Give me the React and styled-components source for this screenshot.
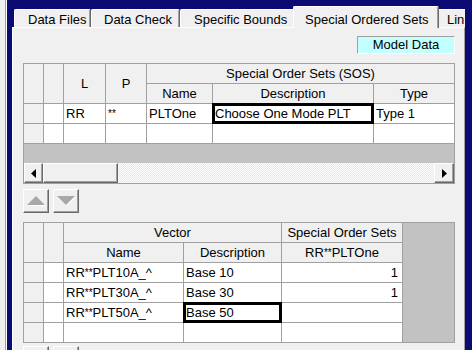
import styled, { createGlobalStyle, css } from "styled-components"

const GlobalStyle = createGlobalStyle`
  html, body {
    margin: 0;
    padding: 0;
    background: #f0f0f0;
  }
  body {
    font-family: "Liberation Sans", Arial, sans-serif;
    font-size: 13px;
    color: #000;
  }
`

const LINE = "#a0a0a0"
const FACE = "#f0f0f0"

const raised = css`
  box-sizing: border-box;
  background: ${FACE};
  border: 1px solid;
  border-color: #fff #696969 #696969 #fff;
  box-shadow: inset -1px -1px ${LINE};
`

const Page = styled.div`
  display: flex;
  width: 472px;
  height: 350px;
  overflow: hidden;
`

const Gutter = styled.div`
  flex: none;
  width: 7px;
  box-sizing: border-box;
  background: ${FACE};
  border-right: 1px solid #fff;
  box-shadow: inset -1px 0 ${LINE};
`

const Window = styled.div`
  flex: 1;
  background: #0b0b73;
  padding: 6px 7px 0 5px;
  overflow: hidden;
`

const TabControl = styled.div`
  display: flex;
  flex-direction: column;
  width: 453px;
  height: 344px;
  overflow: hidden;
`

const TabStrip = styled.div`
  flex: none;
  display: flex;
  align-items: flex-end;
  height: 21px;
  padding-left: 2px;
`

const Tab = styled.div`
  flex: none;
  box-sizing: border-box;
  width: ${(p) => p.$w}px;
  height: 18px;
  padding: 2px 0 0 ${(p) => p.$pl}px;
  line-height: 16px;
  white-space: nowrap;
  background: ${FACE};
  border-top: 1px solid #fff;
  border-left: 1px solid #fff;
  border-right: 1px solid #696969;
  box-shadow: inset -1px 0 ${LINE};
  border-radius: 2px 2px 0 0;
  ${(p) =>
    p.$active &&
    css`
      height: 22px;
      padding-top: 5px;
      margin: 0 -2px -1px;
      position: relative;
      z-index: 1;
    `}
`

const Panel = styled.div`
  flex: 1;
  display: flex;
  flex-direction: column;
  background: ${FACE};
  border-top: 1px solid #fff;
  border-left: 1px solid #fff;
  border-right: 1px solid ${LINE};
  padding: 8px 9px 0 10px;
`

const ModelTag = styled.div`
  align-self: flex-end;
  box-sizing: border-box;
  width: 98px;
  height: 18px;
  border: 1px solid;
  border-color: ${LINE} #fff #fff ${LINE};
  background: #c4ffff;
  text-align: center;
  line-height: 16px;
`

const GridBox = styled.div`
  flex: none;
  display: flex;
  flex-direction: column;
  width: 430px;
  margin-top: ${(p) => p.$top}px;
  border: 1px solid ${LINE};
  background: #c2c2c2;
`

const Sheet = styled.div`
  align-self: flex-start;
  display: grid;
  grid-template-columns: ${(p) => p.$cols};
  grid-auto-rows: 19px;
  gap: 1px;
  background: ${LINE};
  padding-bottom: ${(p) => (p.$lineBelow ? 1 : 0)}px;
  padding-right: ${(p) => (p.$lineRight ? 1 : 0)}px;
`

const Cell = styled.div`
  grid-column: span ${(p) => p.$cs || 1};
  grid-row: span ${(p) => p.$rs || 1};
  display: flex;
  align-items: center;
  justify-content: ${(p) => (p.$head ? "center" : p.$right ? "flex-end" : "flex-start")};
  padding: 0 ${(p) => (p.$right ? 4 : 2)}px;
  background: ${(p) => (p.$head ? FACE : "#fff")};
  line-height: 16px;
  white-space: nowrap;
  overflow: hidden;
  ${(p) =>
    p.$sel &&
    css`
      position: relative;
      z-index: 1;
      box-shadow: 0 0 0 1px #000, inset 0 0 0 2px #000;
    `}
`

const Stars = styled.span`
  font-size: 10px;
  vertical-align: 2px;
`

const Filler = styled.div`
  height: 19px;
`

const ScrollBar = styled.div`
  display: flex;
  height: 20px;
`

const ScrollButton = styled.div`
  ${raised};
  flex: none;
  width: ${(p) => p.$w}px;
  display: flex;
  align-items: center;
  justify-content: center;
`

const Track = styled.div`
  flex: 1;
  background: repeating-conic-gradient(#fff 0 25%, #e6e6e6 0 50%) 0 0 / 2px 2px;
`

const MoveRow = styled.div`
  flex: none;
  display: flex;
  gap: 4px;
  margin-top: ${(p) => p.$top}px;
`

const MoveButton = styled.div`
  ${raised};
  width: 26px;
  height: 24px;
  display: flex;
  align-items: center;
  justify-content: center;
`

const ArrowUp = () => (
  <svg width="20" height="11" viewBox="0 0 20 11">
    <polygon points="2,10 11,1 20,10" fill="#fff" />
    <polygon points="1,9 10,0 19,9" fill="#a8a8a8" />
  </svg>
)

const ArrowDown = () => (
  <svg width="20" height="11" viewBox="0 0 20 11">
    <polygon points="2,1 20,1 11,10" fill="#fff" />
    <polygon points="1,0 19,0 10,9" fill="#a8a8a8" />
  </svg>
)

const ArrowSide = ({ dir }) => (
  <svg width="5" height="9" viewBox="0 0 5 9">
    <polygon points={dir === "left" ? "5,0 5,9 0,4.5" : "0,0 0,9 5,4.5"} fill="#000" />
  </svg>
)

const Name = ({ pre, post }) => (
  <>
    {pre}
    <Stars>**</Stars>
    {post}
  </>
)

const tabs = [
  { label: "Data Files", w: 77, pl: 13 },
  { label: "Data Check", w: 89, pl: 12 },
  { label: "Specific Bounds", w: 115, pl: 13 },
  { label: "Special Ordered Sets", w: 146, pl: 11, active: true },
  { label: "Lin", w: 60, pl: 9 },
]

const vectors = [
  { id: "10", desc: "Base 10", val: "1" },
  { id: "30", desc: "Base 30", val: "1" },
  { id: "50", desc: "Base 50", val: "", sel: true },
]

const MoveButtons = ({ top }) => (
  <MoveRow $top={top}>
    <MoveButton>
      <ArrowUp />
    </MoveButton>
    <MoveButton>
      <ArrowDown />
    </MoveButton>
  </MoveRow>
)

export default function App() {
  return (
    <>
      <GlobalStyle />
      <Page>
        <Gutter />
        <Window>
          <TabControl>
            <TabStrip>
              {tabs.map((t) => (
                <Tab key={t.label} $w={t.w} $pl={t.pl} $active={t.active}>
                  {t.label}
                </Tab>
              ))}
            </TabStrip>
            <Panel>
              <ModelTag>Model Data</ModelTag>

              <GridBox $top={9}>
                <Sheet $cols="19px 19px 41px 40px 65px 160px 80px" $lineBelow>
                  <Cell $head $rs={2} />
                  <Cell $head $rs={2} />
                  <Cell $head $rs={2}>L</Cell>
                  <Cell $head $rs={2}>P</Cell>
                  <Cell $head $cs={3}>Special Order Sets (SOS)</Cell>
                  <Cell $head>Name</Cell>
                  <Cell $head>Description</Cell>
                  <Cell $head>Type</Cell>

                  <Cell $head />
                  <Cell />
                  <Cell>RR</Cell>
                  <Cell>
                    <Stars>**</Stars>
                  </Cell>
                  <Cell>PLTOne</Cell>
                  <Cell $sel>Choose One Mode PLT</Cell>
                  <Cell>Type 1</Cell>

                  <Cell $head />
                  <Cell />
                  <Cell />
                  <Cell />
                  <Cell />
                  <Cell />
                  <Cell />
                </Sheet>
                <Filler />
                <ScrollBar>
                  <ScrollButton $w={19}>
                    <ArrowSide dir="left" />
                  </ScrollButton>
                  <ScrollButton $w={75} />
                  <Track />
                  <ScrollButton $w={20}>
                    <ArrowSide dir="right" />
                  </ScrollButton>
                </ScrollBar>
              </GridBox>

              <MoveButtons top={5} />

              <GridBox $top={9}>
                <Sheet $cols="19px 19px 119px 97px 120px" $lineRight>
                  <Cell $head $rs={2} />
                  <Cell $head $rs={2} />
                  <Cell $head $cs={2}>Vector</Cell>
                  <Cell $head>Special Order Sets</Cell>
                  <Cell $head>Name</Cell>
                  <Cell $head>Description</Cell>
                  <Cell $head>
                    <Name pre="RR" post="PLTOne" />
                  </Cell>

                  {vectors.map((v) => (
                    <Row key={v.id} v={v} />
                  ))}

                  <Cell $head />
                  <Cell />
                  <Cell />
                  <Cell />
                  <Cell />
                </Sheet>
              </GridBox>

              <MoveButtons top={3} />
            </Panel>
          </TabControl>
        </Window>
      </Page>
    </>
  )
}

function Row({ v }) {
  return (
    <>
      <Cell $head />
      <Cell />
      <Cell>
        <Name pre="RR" post={`PLT${v.id}A_^`} />
      </Cell>
      <Cell $sel={v.sel}>{v.desc}</Cell>
      <Cell $right>{v.val}</Cell>
    </>
  )
}
